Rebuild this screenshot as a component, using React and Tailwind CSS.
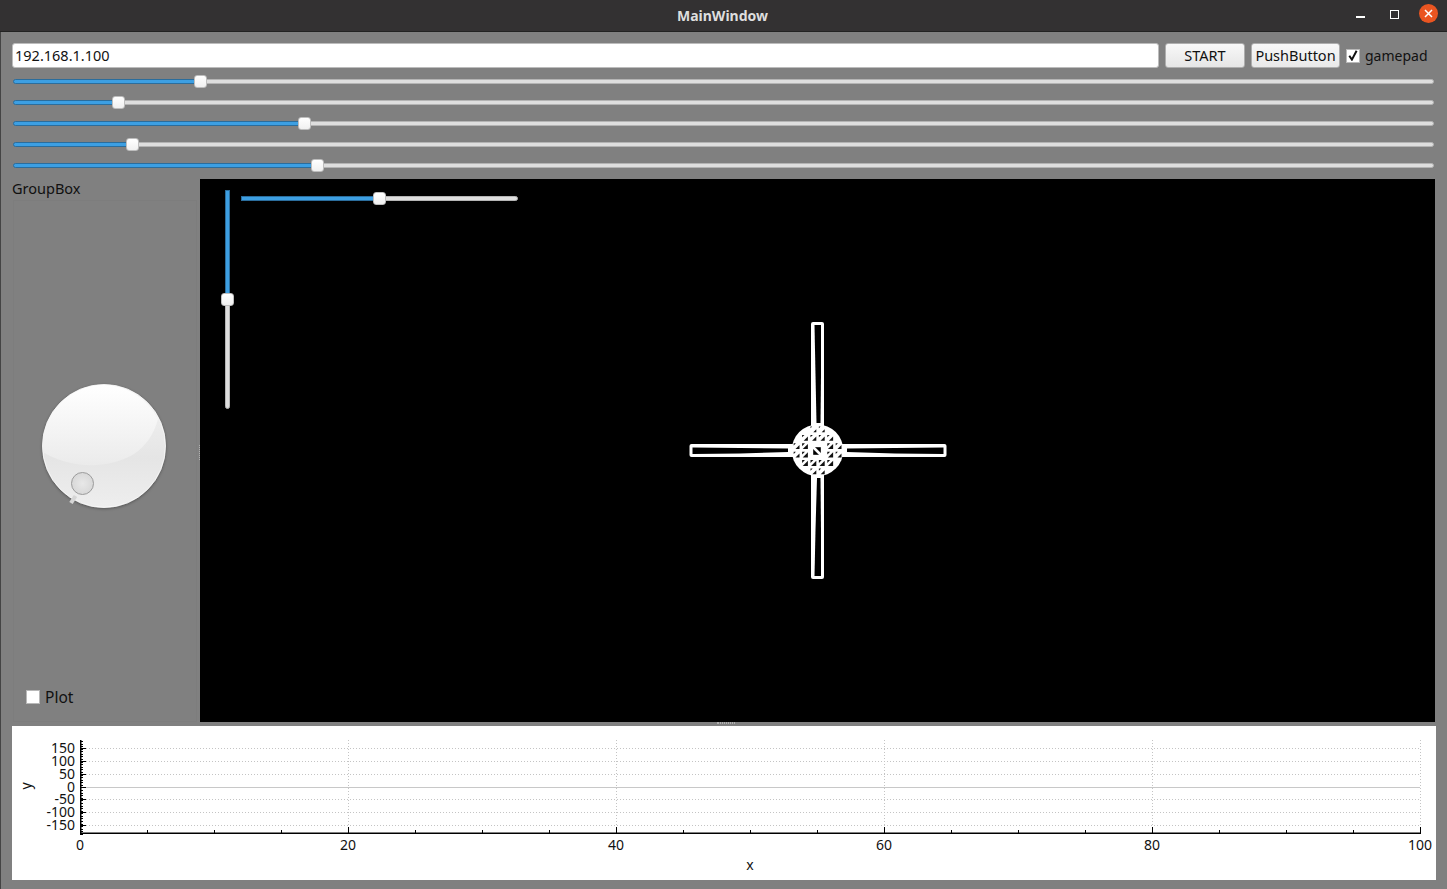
import React from 'react';

const sliderValues = [187, 105, 291, 119, 304];

// Qt style horizontal slider: filled part, handle, rest of the groove
const HSlider = ({ filled }) => (
  <div className="flex items-center h-[21px]">
    <div className="h-[5px] rounded-l-sm border border-[#2b6d9c] bg-[#3d9fe2] -mr-1" style={{ width: filled - 2 }} />
    <div className="relative z-10 w-[13px] h-[13px] rounded-[3px] bg-linear-to-b from-white to-[#f0f0f0] border border-[#bdbdbd] shrink-0" />
    <div className="h-[5px] flex-1 rounded-r-sm border border-[#b4b4b4] bg-[#dedede] -ml-1" />
  </div>
);

const CheckBox = ({ checked }) => (
  <div className="w-[14px] h-[14px] bg-white border border-[#b8b8b8] shrink-0 flex items-center justify-center">
    {checked && (
      <svg width="10" height="11" viewBox="0 0 10 11">
        <path d="M1.3 5.8 L3.9 9.6 L8.6 0.8" fill="none" stroke="#111" strokeWidth="2" />
      </svg>
    )}
  </div>
);

const Knob = () => (
  <svg width="140" height="140" viewBox="0 0 140 140">
    <defs>
      <linearGradient id="knobBody" x1="0" y1="0" x2="0" y2="1">
        <stop offset="0" stopColor="#f4f4f4" />
        <stop offset="0.6" stopColor="#e5e5e5" />
        <stop offset="1" stopColor="#eeeeee" />
      </linearGradient>
      <linearGradient id="knobGloss" x1="0" y1="0" x2="0" y2="1">
        <stop offset="0" stopColor="#ffffff" />
        <stop offset="1" stopColor="#ebebeb" />
      </linearGradient>
      <radialGradient id="knobDot" cx="0.5" cy="0.5" r="0.5">
        <stop offset="0" stopColor="#e8e8e8" />
        <stop offset="1" stopColor="#d8d8d8" />
      </radialGradient>
      <filter id="knobShadow" x="-10%" y="-10%" width="120%" height="120%">
        <feDropShadow dx="0" dy="1" stdDeviation="1.6" floodColor="#000" floodOpacity="0.35" />
      </filter>
    </defs>
    <circle cx="70" cy="70" r="61.5" fill="url(#knobBody)" stroke="#fff" strokeWidth="0.8" filter="url(#knobShadow)" />
    <path d="M9 76 C 30 90 70 96 100 78 C 112 70 120 58 124 43 A 61 61 0 0 0 70 9 A 61 61 0 0 0 9 76 Z" fill="url(#knobGloss)" />
    <path d="M41.5 120 L37 127" stroke="#d6d6d6" strokeWidth="4" />
    <circle cx="48.5" cy="107.5" r="11" fill="url(#knobDot)" stroke="#9c9c9c" strokeWidth="1" />
  </svg>
);

// wireframe quad: drawn in the 275x271 box centred in the black view, hub at 137.5,135.3
const meshCells = () => {
  const cells = [];
  const step = 8.4;
  for (let r = -3; r <= 2; r++) {
    for (let c = -3; c <= 2; c++) {
      if (r >= -1 && r <= 0 && c >= -1 && c <= 0) continue;
      const x = 137.5 + c * step + 1.4;
      const y = 135.3 + r * step + 1.4;
      const far = Math.hypot(x + 2.8 - 137.5, y + 2.8 - 135.3);
      if (far < 24) {
        const size = r === -3 ? 3 : r === -2 ? 4.2 : far > 20 ? 4 : 5.2;
        cells.push([x, y, size]);
      }
    }
  }
  return cells;
};

const Quad = () => (
  <svg width="275" height="271" viewBox="0 0 275 271" shapeRendering="geometricPrecision">
    <rect x="131" y="7" width="13" height="257" rx="2" fill="#fff" />
    <rect x="9.5" y="129" width="257" height="13" rx="2" fill="#fff" />
    <polygon points="134.5,10 141,10 141,60 140.5,108 136.5,108 135.5,60" fill="#000" />
    <polygon points="137,163 140.5,163 141,215 141,261 134.5,261 135.5,215" fill="#000" />
    <polygon points="12.5,132.5 60,133 108,133.5 108,137 60,138.6 12.5,139" fill="#000" />
    <polygon points="167,133.5 215,133 263.5,132.5 263.5,139 215,138.6 167,137" fill="#000" />
    <circle cx="137.5" cy="135.3" r="25.8" fill="#fff" />
    {meshCells().map(([x, y, s]) => (
      <g key={`${x}-${y}`} fill="#111">
        <polygon points={`${x + 5.8},${y + 5.8 - s} ${x + 5.8},${y + 5.8} ${x + 5.8 - s},${y + 5.8}`} />
        <polygon points={`${x},${y} ${x + s * 0.55},${y} ${x},${y + s * 0.55}`} />
      </g>
    ))}
    <rect x="132" y="131" width="10" height="10" fill="#000" stroke="#fff" strokeWidth="2.4" />
    <path d="M132 131 L142 141" stroke="#fff" strokeWidth="2.6" />
  </svg>
);

const xMajor = [0, 20, 40, 60, 80, 100];
const xMinor = Array.from({ length: 21 }, (_, i) => i * 5);
const yMajor = [
  [150, 22.3], [100, 35.3], [50, 48.3], [0, 61.3], [-50, 73.3], [-100, 86.3], [-150, 99.3],
];
const X0 = 68;
const XW = 1340;
const toX = (v) => X0 + (v * XW) / 100;
const yMinor = Array.from({ length: 37 }, (_, i) => 15 + i * 2.58);

// QCustomPlot style chart, coordinates are relative to the white panel
const Plot = () => (
  <svg width="1423" height="154" viewBox="0 0 1423 154" className="block">
    <g stroke="#c4c4c4" strokeWidth="1" strokeDasharray="1 2" shapeRendering="crispEdges">
      {xMajor.slice(1).map((v) => (
        <line key={v} x1={toX(v) + 0.5} x2={toX(v) + 0.5} y1="14" y2="101" />
      ))}
      {yMajor.filter(([v]) => v !== 0).map(([v, y]) => (
        <line key={v} x1={X0} x2={X0 + XW} y1={Math.floor(y) + 0.5} y2={Math.floor(y) + 0.5} />
      ))}
    </g>
    <line x1={X0} x2={X0 + XW} y1="61.5" y2="61.5" stroke="#c8c8c8" strokeWidth="1" shapeRendering="crispEdges" />
    <g stroke="#000" strokeWidth="1" shapeRendering="crispEdges">
      {yMinor.map((y) => (
        <line key={y} x1={X0} x2={X0 + 3} y1={Math.round(y) + 0.5} y2={Math.round(y) + 0.5} />
      ))}
      {yMajor.map(([v, y]) => (
        <line key={v} x1={X0} x2={X0 + 6} y1={Math.floor(y) + 0.5} y2={Math.floor(y) + 0.5} />
      ))}
      {xMinor.map((v) => (
        <line key={v} x1={toX(v) + 0.5} x2={toX(v) + 0.5} y1="104" y2="107" />
      ))}
      {xMajor.map((v) => (
        <line key={v} x1={toX(v) + 0.5} x2={toX(v) + 0.5} y1="101" y2="107" />
      ))}
    </g>
    <rect x={X0} y="14" width="1.5" height="94" fill="#000" />
    <rect x={X0} y="106.5" width={XW + 1} height="1.5" fill="#000" />
    <g fontFamily="'Noto Sans', sans-serif" fontSize="14" fill="#111">
      {yMajor.map(([v, y]) => (
        <text key={v} x="63" y={y + 5} textAnchor="end">{v}</text>
      ))}
      {xMajor.map((v) => (
        <text key={v} x={toX(v)} y="124" textAnchor="middle">{v}</text>
      ))}
      <text x="738" y="144" textAnchor="middle">x</text>
      <text x="0" y="0" textAnchor="middle" transform="translate(19 60) rotate(-90)">y</text>
    </g>
  </svg>
);

export default function App() {
  return (
    <div className="w-[1447px] h-[889px] overflow-hidden flex flex-col bg-[#808080] text-[#111] font-['Noto_Sans',sans-serif]">
      <div className="h-8 shrink-0 bg-[#333132] border-b border-[#222] flex items-center justify-between">
        <div className="w-[120px]" />
        <div className="text-[14px] font-bold text-[#dedede] -ml-[2px]">MainWindow</div>
        <div className="w-[120px] flex items-center justify-end pr-[9px]">
          <div className="w-[9px] h-[1.5px] bg-white mt-[3px]" />
          <div className="w-[9px] h-[9px] border border-white -mt-[3px] ml-[25px]" />
          <div className="w-[19px] h-[19px] rounded-full bg-[#ea5521] flex items-center justify-center -mt-[5px] ml-[20px]">
            <svg width="9" height="9" viewBox="0 0 9 9">
              <path d="M1 1 L8 8 M8 1 L1 8" stroke="#fff" strokeWidth="1.5" />
            </svg>
          </div>
        </div>
      </div>

      <div className="flex-1 flex flex-col border-l border-[#444] pl-[11px] pr-[12px] pt-[11px] pb-[9px]">
        <div className="flex items-center h-[25px] text-[14.5px]">
          <div className="flex-1 h-full bg-white border border-[#bcbcbc] rounded-[3px] flex items-center px-[2px]">
            192.168.1.100
          </div>
          <div className="w-20 h-full ml-[6px] rounded-[3px] border border-[#aeaeae] bg-linear-to-b from-[#f8f8f8] to-[#e6e6e6] flex items-center justify-center">
            START
          </div>
          <div className="w-[89px] h-full ml-[6px] rounded-[3px] border border-[#aeaeae] bg-linear-to-b from-[#f8f8f8] to-[#e9e9e9] flex items-center justify-center">
            PushButton
          </div>
          <div className="ml-[6px] flex items-center w-[89px]">
            <CheckBox checked />
            <span className="ml-[5px] text-[14px]">gamepad</span>
          </div>
        </div>

        <div className="mt-[3px] pl-px pr-px">
          {sliderValues.map((v, i) => (
            <HSlider key={i} filled={v} />
          ))}
        </div>

        <div className="flex mt-[3px] h-[543px] -ml-[11px] -mr-[12px] pr-[12px]">
          <div className="w-[199px] shrink-0 relative flex flex-col text-[14.5px]">
            <div className="pl-[11px] h-[21px] flex items-center -translate-y-px">GroupBox</div>
            <div className="flex-1 ml-[12px] mr-[3px] border border-[#7d7d7d] flex flex-col">
              <div className="h-[490px] flex flex-col">
                <div className="flex justify-center pt-[175px] pr-[3px] pl-[1px]">
                  <Knob />
                </div>
              </div>
              <div className="flex items-center pl-[12px] -mt-[6px]">
                <CheckBox />
                <span className="ml-[5px] text-[15.5px] translate-y-px">Plot</span>
              </div>
            </div>
            <div className="absolute right-0 top-[266px] w-px h-[15px] border-l border-dotted border-[#b0b0b0]" />
          </div>

          <div className="flex-1 bg-black relative flex items-center justify-center">
            <Quad />
            <div className="absolute left-[41px] top-[9px] w-[277px]">
              <div className="flex items-center h-[21px]">
                <div className="h-[5px] w-[136px] border border-[#2b6d9c] bg-[#3d9fe2] -mr-1" />
                <div className="relative z-10 w-[13px] h-[13px] rounded-[3px] bg-linear-to-b from-white to-[#f0f0f0] border border-[#bdbdbd] shrink-0" />
                <div className="h-[5px] flex-1 rounded-r-sm border border-[#b4b4b4] bg-[#dedede] -ml-1" />
              </div>
            </div>
            <div className="absolute left-[21px] top-[11px] h-[219px] w-[13px] flex flex-col items-center">
              <div className="w-[5px] h-[107px] border border-[#2b6d9c] bg-[#3d9fe2] -mb-1" />
              <div className="relative z-10 w-[13px] h-[13px] rounded-[3px] bg-linear-to-b from-white to-[#f0f0f0] border border-[#bdbdbd] shrink-0" />
              <div className="w-[5px] flex-1 rounded-b-sm border border-[#b4b4b4] bg-[#dedede] -mt-1" />
            </div>
          </div>
        </div>

        <div className="h-1 flex items-center justify-center pl-[4px]">
          <div className="w-[18px] h-[2px] border-y border-dotted border-[#b0b0b0] -translate-y-px" />
        </div>

        <div className="bg-white h-[154px] -mr-px">
          <Plot />
        </div>
      </div>
    </div>
  );
}
